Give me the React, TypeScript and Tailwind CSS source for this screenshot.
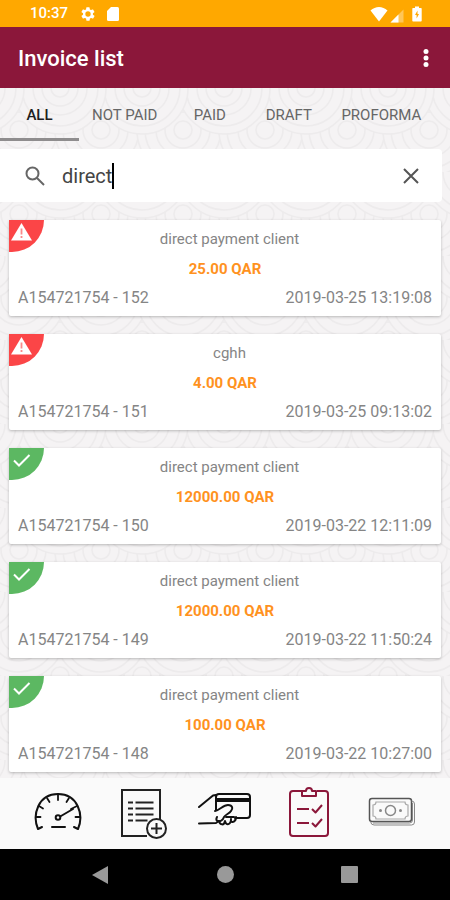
import { useState } from "react";
import clsx from "clsx";

type Status = "unpaid" | "paid";

interface Invoice {
  number: string;
  client: string;
  amount: string;
  date: string;
  status: Status;
}

const TABS = ["ALL", "NOT PAID", "PAID", "DRAFT", "PROFORMA"];

const INVOICES: Invoice[] = [
  { number: "A154721754 - 152", client: "direct payment client", amount: "25.00 QAR", date: "2019-03-25 13:19:08", status: "unpaid" },
  { number: "A154721754 - 151", client: "cghh", amount: "4.00 QAR", date: "2019-03-25 09:13:02", status: "unpaid" },
  { number: "A154721754 - 150", client: "direct payment client", amount: "12000.00 QAR", date: "2019-03-22 12:11:09", status: "paid" },
  { number: "A154721754 - 149", client: "direct payment client", amount: "12000.00 QAR", date: "2019-03-22 11:50:24", status: "paid" },
  { number: "A154721754 - 148", client: "direct payment client", amount: "100.00 QAR", date: "2019-03-22 10:27:00", status: "paid" },
];

function StatusBar() {
  return (
    <div className="flex h-[27px] items-center bg-[#ffa800] pr-7 pl-[30px] text-white">
      <span className="text-[15px] font-medium">10:37</span>
      <svg viewBox="0 0 24 24" className="ml-3 size-4" fill="currentColor">
        <path d="M19.4 13a7.800 7.800 0 0 0 0-2l2.100-1.600a.5.5 0 0 0 .1-.6l-2-3.500a.5.5 0 0 0-.6-.2l-2.500 1a7.300 7.300 0 0 0-1.700-1l-.4-2.600a.5.5 0 0 0-.5-.5h-4a.5.5 0 0 0-.5.500L9.100 5.100a7.700 7.700 0 0 0-1.700 1l-2.500-1a.5.5 0 0 0-.6.2l-2 3.500a.5.5 0 0 0 .1.600L4.600 11a7.800 7.800 0 0 0 0 2l-2.200 1.600a.5.5 0 0 0-.1.600l2 3.500c.1.200.4.300.6.200l2.500-1c.5.400 1.100.700 1.700 1l.4 2.600c0 .3.200.5.500.5h4c.300 0 .5-.2.500-.5l.4-2.600c.6-.3 1.200-.6 1.700-1l2.500 1c.2.100.5 0 .6-.2l2-3.500a.5.5 0 0 0-.1-.6zM12 16a4 4 0 1 1 0-8 4 4 0 0 1 0 8z" />
      </svg>
      <svg viewBox="0 0 14 16" className="ml-2.5 h-4 w-3.5" fill="currentColor">
        <path d="M5 1h6.500A1.500 1.500 0 0 1 13 2.500v11a1.500 1.500 0 0 1-1.500 1.500h-9A1.500 1.500 0 0 1 1 13.500V5z" />
      </svg>
      <svg viewBox="0 0 18 16" className="ml-auto h-4 w-[18px]" fill="currentColor">
        <path d="M9 15.500.5 4.500C5.500-.2 12.500-.2 17.500 4.500z" />
      </svg>
      <svg viewBox="0 0 14 14" className="mt-1 ml-0.5 size-3.5" fill="currentColor">
        <path d="M13.500.5v13H.5z" opacity="0.35" />
        <path d="M8.500 5.500v8h-8z" />
      </svg>
      <svg viewBox="0 0 10 16" className="ml-2 h-4 w-2.5" fill="currentColor">
        <path d="M3 .5h4V2h2a.7.7 0 0 1 .7.700v12a.8.800 0 0 1-.8.800H1.100a.8.800 0 0 1-.8-.8v-12A.7.700 0 0 1 1 2h2z" />
        <path d="M5.500 4.500 3 9h1.600v3.500L7 8H5.500z" fill="#ffa800" />
      </svg>
    </div>
  );
}

function AppBar() {
  return (
    <header className="flex h-[61px] items-center justify-between bg-[#8b173a] pr-3 pl-[18px] text-white">
      <h1 className="pt-0.5 text-[22px] font-medium">Invoice list</h1>
      <button type="button" aria-label="More options" className="flex w-6 justify-center">
        <svg viewBox="0 0 6 20" className="h-5 w-1.5" fill="currentColor">
          <circle cx="3" cy="3.500" r="2.500" />
          <circle cx="3" cy="10" r="2.500" />
          <circle cx="3" cy="16.500" r="2.500" />
        </svg>
      </button>
    </header>
  );
}

function Rings({ cx, cy }: { cx: number; cy: number }) {
  return (
    <g>
      {[46, 38, 27, 18, 9].map((r) => (
        <circle key={r} cx={cx} cy={cy} r={r} />
      ))}
    </g>
  );
}

// Overlapping rings, tiled behind the whole list
function Backdrop() {
  return (
    <svg className="absolute inset-0 -z-10 h-full w-full" aria-hidden="true">
      <defs>
        <pattern id="rings" width="82" height="84" patternUnits="userSpaceOnUse">
          <g fill="#f5f3f4" stroke="#edebec" strokeWidth="1.5">
            <Rings cx={60} cy={84} />
            <Rings cx={-22} cy={84} />
            <Rings cx={19} cy={42} />
            <Rings cx={101} cy={42} />
            <Rings cx={60} cy={0} />
            <Rings cx={-22} cy={0} />
          </g>
        </pattern>
      </defs>
      <rect width="100%" height="100%" fill="url(#rings)" />
    </svg>
  );
}

interface TabsProps {
  active: string;
  onSelect: (tab: string) => void;
}

function Tabs({ active, onSelect }: TabsProps) {
  return (
    <nav className="flex h-[53px] overflow-hidden">
      {TABS.map((tab) => (
        <button
          key={tab}
          type="button"
          onClick={() => onSelect(tab)}
          className={clsx(
            "min-w-[79px] shrink-0 border-b-3 px-[13px] pt-1 text-[15px] whitespace-nowrap",
            tab === active
              ? "border-[#8f8d8e] font-medium text-[#202020]"
              : "border-transparent text-[#666]",
          )}
        >
          {tab}
        </button>
      ))}
    </nav>
  );
}

interface SearchBarProps {
  value: string;
  onChange: (value: string) => void;
}

function SearchBar({ value, onChange }: SearchBarProps) {
  return (
    <div className="mt-2 mr-2 flex h-[53px] items-center rounded-r-sm bg-white pr-[22px] pl-[25px]">
      <svg viewBox="0 0 20 20" className="size-5" fill="none" stroke="#666" strokeWidth="2">
        <circle cx="7.500" cy="7.500" r="6" />
        <path d="m12 12 7 7" />
      </svg>
      <div className="ml-[17px] flex flex-1 items-center">
        <input
          type="text"
          aria-label="Search invoices"
          value={value}
          onChange={(e) => onChange(e.target.value)}
          className="field-sizing-content text-xl text-[#444] caret-transparent outline-none"
        />
        <span className="h-[26px] w-0.5 bg-black" />
      </div>
      <button type="button" aria-label="Clear search" onClick={() => onChange("")}>
        <svg viewBox="0 0 18 18" className="size-[18px]" stroke="#555" strokeWidth="2">
          <path d="m2 2 14 14M16 2 2 16" />
        </svg>
      </button>
    </div>
  );
}

function StatusCorner({ status }: { status: Status }) {
  return (
    <div
      className={clsx(
        "absolute top-0 left-0 h-8 w-[35px] rounded-br-full",
        status === "paid" ? "bg-[#5cb862]" : "bg-[#fb4547]",
      )}
    >
      {status === "paid" ? (
        <svg viewBox="0 0 35 32" className="h-8 w-[35px]" fill="none" stroke="#fff" strokeWidth="2">
          <path d="m5 12.500 5 5L20.500 7" />
        </svg>
      ) : (
        <svg viewBox="0 0 35 32" className="h-8 w-[35px]">
          <path d="M12.500 3 23 20.500H2z" fill="#fff" />
          <path d="M12.500 8.500v6M12.500 16v2" stroke="#fb8a8b" strokeWidth="1.800" />
        </svg>
      )}
    </div>
  );
}

function InvoiceCard({ invoice }: { invoice: Invoice }) {
  return (
    <li className="relative rounded-xs bg-white px-[9px] pt-[7px] pb-2 text-[15px] text-[#858585] shadow-[0_1px_3px_rgba(0,0,0,0.25)]">
      <StatusCorner status={invoice.status} />
      <p className="pl-[9px] text-center leading-6">{invoice.client}</p>
      <p className="mt-1 text-center leading-7 font-bold text-[#ff921e]">{invoice.amount}</p>
      <div className="flex justify-between pt-[5px] text-base leading-5">
        <span>{invoice.number}</span>
        <span>{invoice.date}</span>
      </div>
    </li>
  );
}

function GaugeIcon() {
  return (
    <svg viewBox="0 2 50 42" className="h-[42px] w-[50px]" fill="none" stroke="#111" strokeWidth="2" strokeLinecap="round" strokeLinejoin="round">
      <path d="m9 36-4 2C-1 24 5 3 25 3s26 21 20 35l-4-2" />
      <path d="M25 3v6M14 7l2.500 4M36 7l-2.500 4M6 15l4 2.500M44 15l-6 3M3 26h4.500M47 26h-4.500" strokeWidth="1.800" />
      <path d="m28 25 12-7M19 36h13" />
      <circle cx="25" cy="26.500" r="2.300" />
    </svg>
  );
}

function NewInvoiceIcon() {
  return (
    <svg viewBox="-6 0 54 52" className="h-[52px] w-[54px]" fill="none" stroke="#222" strokeWidth="2">
      <path d="M27 48H2V2h38v29" />
      <path d="M8 14.500h5M8 20.500h5M8 26.500h5M8 32.500h5M15.500 14.500h18M15.500 20.500h18M15.500 26.500h18M15.500 32.500h12" />
      <circle cx="36.500" cy="40.500" r="9.500" fill="#fafafa" />
      <path d="M31 40.500h11M36.500 35v11" />
    </svg>
  );
}

function PayIcon() {
  return (
    <svg viewBox="0 2 54 42" className="h-[42px] w-[54px]" fill="none" stroke="#111" strokeWidth="2" strokeLinecap="round" strokeLinejoin="round">
      <path d="M18 18V5q0-3 3-3h28q3 0 3 3v18q0 3-3 3H37" transform="translate(0 1)" />
      <path d="M19 9h32" strokeWidth="4" />
      <path d="M1 16 15 4.500l3-.5M1 32.500l17-.5 3-2" />
      <path d="M17 20c5-1 8-6 13-6 5 0 5 4 3 6-2 3-5 3-7 6-1 3-4 5-6 4-2 0-2-2-1-4" />
      <path d="M21 30c1 4 5 5 6 0M27 30c1 5 6 4 6-2M33 30c1 2 5 1 5-4M28 26h8" />
    </svg>
  );
}

function InvoicesIcon() {
  return (
    <svg viewBox="0 0 42 56" className="h-14 w-[42px]" fill="none" stroke="#8b173a" strokeWidth="2" strokeLinejoin="round">
      <path d="M14 5H5Q2 5 2 8v39q0 3 3 3h32q3 0 3-3V8q0-3-3-3h-8" />
      <path d="M14 5h4c0-4 6-4 6 0h4v5H14z" />
      <path d="M9 23h12M9 37h12M24 23l3.500 3.500L34 19M24 37l3.500 3.500L34 33" />
    </svg>
  );
}

function CashIcon() {
  return (
    <svg viewBox="0 0 48 34" className="h-[34px] w-12" fill="none" stroke="#888" strokeWidth="1.500">
      <rect x="1.500" y="1.500" width="42" height="23" rx="2.500" stroke="#555" />
      <path d="M43.500 4q3 0 3 3v18q0 3-3 3H6q-3 0-3.500-3.500M44.500 6v17q0 3-3 3H5" strokeWidth="1" />
      <path d="M8 5h29q0 3 3 3v11q-3 0-3 3H8q0-3-3-3V8q3 0 3-3z" stroke="#aaa" strokeWidth="1.200" />
      <circle cx="22.500" cy="13.500" r="5" />
      <circle cx="12.500" cy="13.500" r="1.500" fill="#888" stroke="none" />
      <circle cx="32.500" cy="13.500" r="1.500" fill="#888" stroke="none" />
    </svg>
  );
}

const NAV_ITEMS = [
  { label: "Dashboard", Icon: GaugeIcon },
  { label: "New invoice", Icon: NewInvoiceIcon },
  { label: "Card payment", Icon: PayIcon },
  { label: "Invoices", Icon: InvoicesIcon },
  { label: "Cash", Icon: CashIcon },
];

function BottomNav() {
  return (
    <nav className="grid h-[71px] grid-cols-5 bg-[#fafafa] px-4">
      {NAV_ITEMS.map(({ label, Icon }) => (
        <button key={label} type="button" aria-label={label} className="flex items-center justify-center">
          <Icon />
        </button>
      ))}
    </nav>
  );
}

function SystemBar() {
  return (
    <div className="flex h-[51px] items-center justify-center gap-[107px] bg-black text-[#999]">
      <button type="button" aria-label="Back">
        <svg viewBox="0 0 18 18" className="size-[18px]" fill="currentColor">
          <path d="M16 0v18L0 9z" />
        </svg>
      </button>
      <button type="button" aria-label="Home">
        <span className="block size-[17px] rounded-full bg-current" />
      </button>
      <button type="button" aria-label="Recent apps">
        <span className="block size-[17px] rounded-[1px] bg-current" />
      </button>
    </div>
  );
}

export default function App() {
  const [tab, setTab] = useState("ALL");
  const [query, setQuery] = useState("direct");

  return (
    <div className="flex min-h-screen flex-col font-[Roboto,sans-serif]">
      <StatusBar />
      <AppBar />
      <main className="relative isolate flex-1">
        <Backdrop />
        <Tabs active={tab} onSelect={setTab} />
        <SearchBar value={query} onChange={setQuery} />
        <ul className="space-y-[18px] px-[9px] pt-[18px] pb-1">
          {INVOICES.map((invoice) => (
            <InvoiceCard key={invoice.number} invoice={invoice} />
          ))}
        </ul>
      </main>
      <BottomNav />
      <SystemBar />
    </div>
  );
}
